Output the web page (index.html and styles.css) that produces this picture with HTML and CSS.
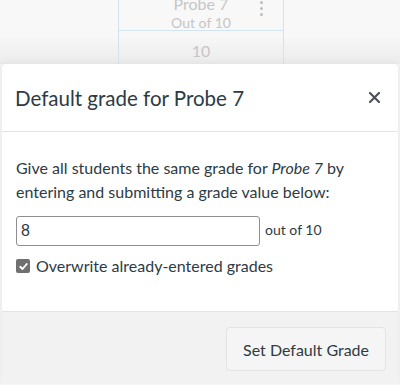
FILE: index.html
```html
<!DOCTYPE html>
<html lang="en">
<head>
    <meta charset="UTF-8">
    <meta name="viewport" content="width=device-width, initial-scale=1.0">
    <title>Default grade for Probe 7</title>
    <link rel="stylesheet" href="styles.css">
</head>
<body>
    <div class="gradebook">
        <div class="column">
            <div class="column-header">
                <div class="column-name">Probe 7</div>
                <div class="column-points">Out of 10</div>
                <span class="kebab">
                    <i></i><i></i><i></i>
                </span>
            </div>
            <div class="column-cell">10</div>
        </div>
    </div>

    <div class="modal">
        <div class="modal-header">
            <h2>Default grade for Probe 7</h2>
            <button class="close-btn" aria-label="Close">
                <svg width="11" height="11" viewBox="0 0 11 11">
                    <path d="M1 1 L10 10 M10 1 L1 10" stroke="#4f5357" stroke-width="2.2" stroke-linecap="round"/>
                </svg>
            </button>
        </div>

        <div class="modal-body">
            <p>Give all students the same grade for <em>Probe 7</em> by entering and submitting a grade value below:</p>

            <div class="grade-row">
                <input type="text" id="grade" value="8">
                <span class="out-of">out of 10</span>
            </div>

            <label class="check-row">
                <span class="check-box">
                    <svg width="11" height="11" viewBox="0 0 11 11">
                        <path d="M2.2 5.8 L4.5 8 L8.8 3" fill="none" stroke="#fff" stroke-width="1.9" stroke-linecap="round" stroke-linejoin="round"/>
                    </svg>
                </span>
                Overwrite already-entered grades
            </label>
        </div>

        <div class="modal-footer">
            <button class="submit-btn">Set Default Grade</button>
        </div>
    </div>
</body>
</html>
```

FILE: styles.css
```css
body {
    margin: 0;
    font-family: Lato, "Open Sans", sans-serif;
    color: #2d3b45;
    background-color: #f4f4f4;
}
.gradebook {
    height: 64px;
    padding-left: 118px;
    background: linear-gradient(to bottom, #f8f8f8 0, #f8f8f8 35px, #f3f3f3 45px, #ececec 64px);
    overflow: hidden;
}
.column {
    width: 164px;
    border-left: 1px solid #d2e4f2;
    border-right: 1px solid #d2e4f2;
    color: #c6c6c6;
    text-align: center;
}
.column-header {
    position: relative;
    height: 35px;
    border-bottom: 1px solid #d2e4f2;
}
.column-name {
    font-size: 16px;
    line-height: 18px;
    margin-top: -5px;
}
.column-points {
    font-size: 14px;
    line-height: 18px;
    margin-top: 1px;
}
.kebab {
    position: absolute;
    right: 20px;
    top: 6px;
    display: flex;
    flex-direction: column;
    gap: 3px;
}
.kebab i {
    width: 3px;
    height: 3px;
    border-radius: 50%;
    background-color: #bdbdbd;
}
.column-cell {
    font-size: 16px;
    line-height: 28px;
    padding-top: 6px;
}
.modal {
    margin: 0 2px;
    background-color: #fff;
    border-radius: 4px;
    box-shadow: 0 0 10px rgba(0,0,0,0.06);
    overflow: hidden;
}
.modal-header {
    display: flex;
    align-items: center;
    justify-content: space-between;
    height: 67px;
    padding: 0 14px 0 13px;
    border-bottom: 1px solid #e5e5e5;
}
.modal-header h2 {
    margin: 0;
    font-size: 20.5px;
    font-weight: normal;
    color: #2d3b45;
}
.close-btn {
    background: none;
    border: none;
    padding: 4px;
    cursor: pointer;
    display: flex;
}
.modal-body {
    padding: 24px 14px 35px;
    font-size: 16px;
}
.modal-body p {
    margin: 0;
    line-height: 24px;
}
.grade-row {
    display: flex;
    align-items: center;
    margin-top: 12px;
}
.grade-row input {
    width: 244px;
    height: 30px;
    box-sizing: border-box;
    padding: 0 4px;
    border: 1px solid #8f8f8f;
    border-radius: 3px;
    font-family: "Liberation Sans", Arial, sans-serif;
    font-size: 16px;
    color: #2d3b45;
}
.out-of {
    margin-left: 5px;
    margin-top: -3px;
    font-size: 14px;
}
.check-row {
    display: flex;
    align-items: center;
    gap: 6px;
    margin-top: 10px;
    line-height: 20px;
}
.check-box {
    width: 14px;
    height: 14px;
    border-radius: 2px;
    background-color: #707070;
    display: flex;
    align-items: center;
    justify-content: center;
}
.modal-footer {
    display: flex;
    justify-content: flex-end;
    padding: 15px 12px 13px;
    background-color: #f2f2f2;
    border-top: 1px solid #e3e3e3;
}
.submit-btn {
    height: 44px;
    padding: 0 16px;
    font-family: Lato, "Open Sans", sans-serif;
    font-size: 16px;
    color: #2d3b45;
    background-color: #f5f5f5;
    border: 1px solid #e4e4e4;
    border-radius: 4px;
    cursor: pointer;
}
```
